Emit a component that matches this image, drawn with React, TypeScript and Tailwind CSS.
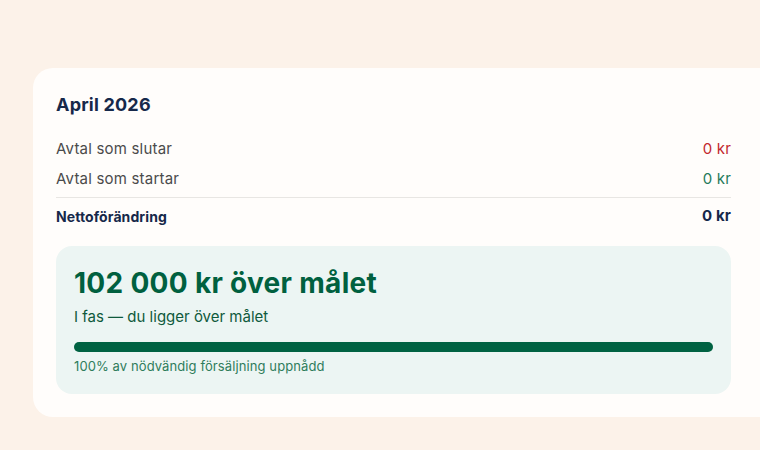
export default function App() {
  return (
    <div className="h-[450px] w-[760px] overflow-hidden bg-[#fcf2e9] pl-[33px] pt-[68px] font-['Inter',sans-serif]">
      <div className="w-[760px] rounded-[20px] bg-[#fffdfb] pb-[23px] pl-[23px] pt-[23px]">
        <div className="w-[675px]">
          <h2 className="text-[18px] font-bold leading-[28px] tracking-[0.2px] text-[#16284a]">April 2026</h2>

          <div className="mt-[18px] flex h-[24px] items-center justify-between text-[15px] tracking-[0.2px] text-[#4b4b4b]">
            <span>Avtal som slutar</span>
            <span className="text-[#c2272d]">0 kr</span>
          </div>
          <div className="mt-[6px] flex h-[24px] items-center justify-between text-[15px] tracking-[0.2px] text-[#4b4b4b]">
            <span>Avtal som startar</span>
            <span className="text-[#1f7a5a]">0 kr</span>
          </div>

          <div className="mt-[6px] border-t border-[#e8e6e3] pt-[8px]">
            <div className="flex h-[20px] items-center justify-between text-[14px] font-bold tracking-[0.1px] text-[#16284a]">
              <span>Nettoförändring</span>
              <span className="text-[15px]">0 kr</span>
            </div>
          </div>

          <div className="mt-[20px] rounded-[16px] bg-[#ecf5f3] px-[18px] pb-[19px] pt-[19px]">
            <p className="text-[28px] font-bold leading-[36px] tracking-[0.3px] text-[#00603f]">
              102 000 kr över målet
            </p>
            <p className="mt-[5px] text-[15px] leading-[22px] text-[#0f5a3c]">
              I fas — du ligger över målet
            </p>
            <div className="mt-[14px] h-[10px] w-full rounded-full bg-[#cfe3dc]">
              <div className="h-full rounded-full bg-[#006242]" style={{ width: "100%" }} />
            </div>
            <p className="mt-[5px] text-[13px] leading-[18px] tracking-[0.1px] text-[#2f7d5c]">
              100% av nödvändig försäljning uppnådd
            </p>
          </div>
        </div>
      </div>
    </div>
  );
}
